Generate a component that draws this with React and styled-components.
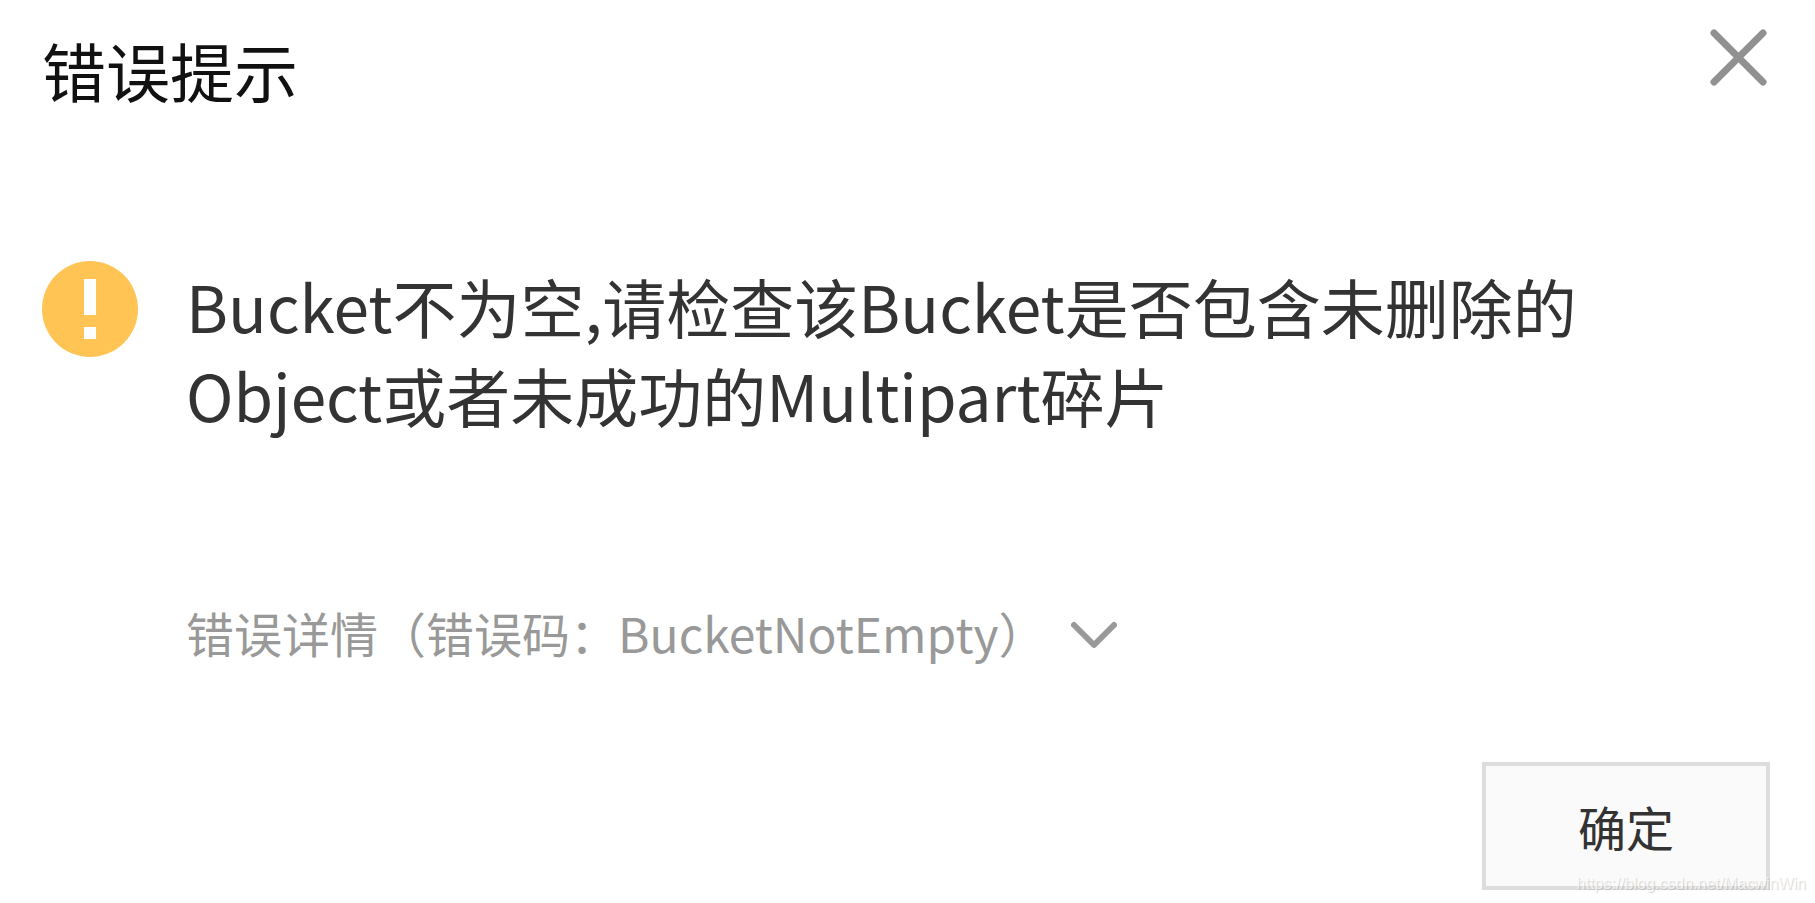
import React from 'react';
import styled, { createGlobalStyle } from 'styled-components';

const color = {
  title: '#111',
  text: '#333',
  muted: '#999',
  icon: '#919191',
  warning: '#ffc453',
  border: '#ddd',
  surface: '#fafafa',
};

const fontSize = {
  sm: '48px',
  lg: '64px',
};

const GlobalStyle = createGlobalStyle`
  *, *::before, *::after {
    box-sizing: border-box;
  }

  body {
    margin: 0;
    background: #fff;
    font-family: "Noto Sans CJK SC", sans-serif;
  }

  button {
    font-family: inherit;
    cursor: pointer;
  }
`;

const StyledDialog = styled.section`
  display: flex;
  flex-direction: column;
  position: relative;
  padding: 29px 45px 13px 42px;
`;

const Header = styled.header`
  display: flex;
  justify-content: space-between;
  align-items: flex-start;
`;

const Title = styled.h1`
  margin: 0;
  padding-top: 4px;
  color: ${color.title};
  font-size: ${fontSize.lg};
  font-weight: 400;
  line-height: 72px;
`;

const IconButton = styled.button`
  display: flex;
  padding: 0 3px 0 0;
  border: 0;
  background: none;
  color: ${color.icon};
`;

const Body = styled.div`
  display: flex;
  align-items: flex-start;
  gap: 48px;
  margin-top: 156px;
`;

const WarningIcon = styled.svg`
  flex: none;
  width: 96px;
  height: 96px;
`;

const Content = styled.div`
  flex: 1;
  min-width: 0;
  padding-right: 48px;
`;

const Message = styled.p`
  margin: 0;
  color: ${color.text};
  font-size: ${fontSize.lg};
  line-height: 89px;
`;

const DetailsToggle = styled.button`
  display: flex;
  align-items: center;
  gap: 24px;
  margin-top: 161px;
  padding: 0;
  border: 0;
  background: none;
  color: ${color.muted};
  font-size: ${fontSize.sm};
  line-height: 64px;
  text-align: left;
`;

const Footer = styled.footer`
  display: flex;
  justify-content: flex-end;
  margin-top: 98px;
`;

const ConfirmButton = styled.button`
  padding: 28px 92px;
  border: 4px solid ${color.border};
  background: ${color.surface};
  color: ${color.text};
  font-size: ${fontSize.sm};
  line-height: 64px;
`;

const Watermark = styled.span`
  position: absolute;
  right: 9px;
  bottom: 9px;
  color: rgba(255, 255, 255, 0.7);
  font: 16px/20px "Liberation Sans", sans-serif;
  text-shadow: 1px 1px 1px rgba(0, 0, 0, 0.16);
  pointer-events: none;
`;

function CloseIcon() {
  return (
    <svg width="57" height="57" viewBox="0 0 57 57" aria-hidden="true">
      <path d="M4 4L53 53M53 4L4 53" stroke="currentColor" strokeWidth="7" strokeLinecap="round" />
    </svg>
  );
}

function ChevronIcon() {
  return (
    <svg width="46" height="34" viewBox="0 0 46 34" fill="none" aria-hidden="true">
      <path
        d="M3 10L23 30L43 10"
        stroke="currentColor"
        strokeWidth="6"
        strokeLinecap="round"
        strokeLinejoin="round"
      />
    </svg>
  );
}

export default function App() {
  return (
    <>
      <GlobalStyle />
      <StyledDialog role="alertdialog" aria-labelledby="title" aria-describedby="message">
        <Header>
          <Title id="title">错误提示</Title>
          <IconButton type="button" aria-label="关闭">
            <CloseIcon />
          </IconButton>
        </Header>
        <Body>
          <WarningIcon viewBox="0 0 96 96" aria-hidden="true">
            <circle cx="48" cy="48" r="48" fill={color.warning} />
            <path d="M42 18h12v36H42zM42 66h12v12H42z" fill="#fff" />
          </WarningIcon>
          <Content>
            <Message id="message">
              Bucket不为空,请检查该Bucket是否包含未删除的Object或者未成功的Multipart碎片
            </Message>
            <DetailsToggle type="button" aria-expanded="false">
              错误详情（错误码：BucketNotEmpty）
              <ChevronIcon />
            </DetailsToggle>
          </Content>
        </Body>
        <Footer>
          <ConfirmButton type="button">确定</ConfirmButton>
        </Footer>
        <Watermark>https://blog.csdn.net/MacwinWin</Watermark>
      </StyledDialog>
    </>
  );
}
